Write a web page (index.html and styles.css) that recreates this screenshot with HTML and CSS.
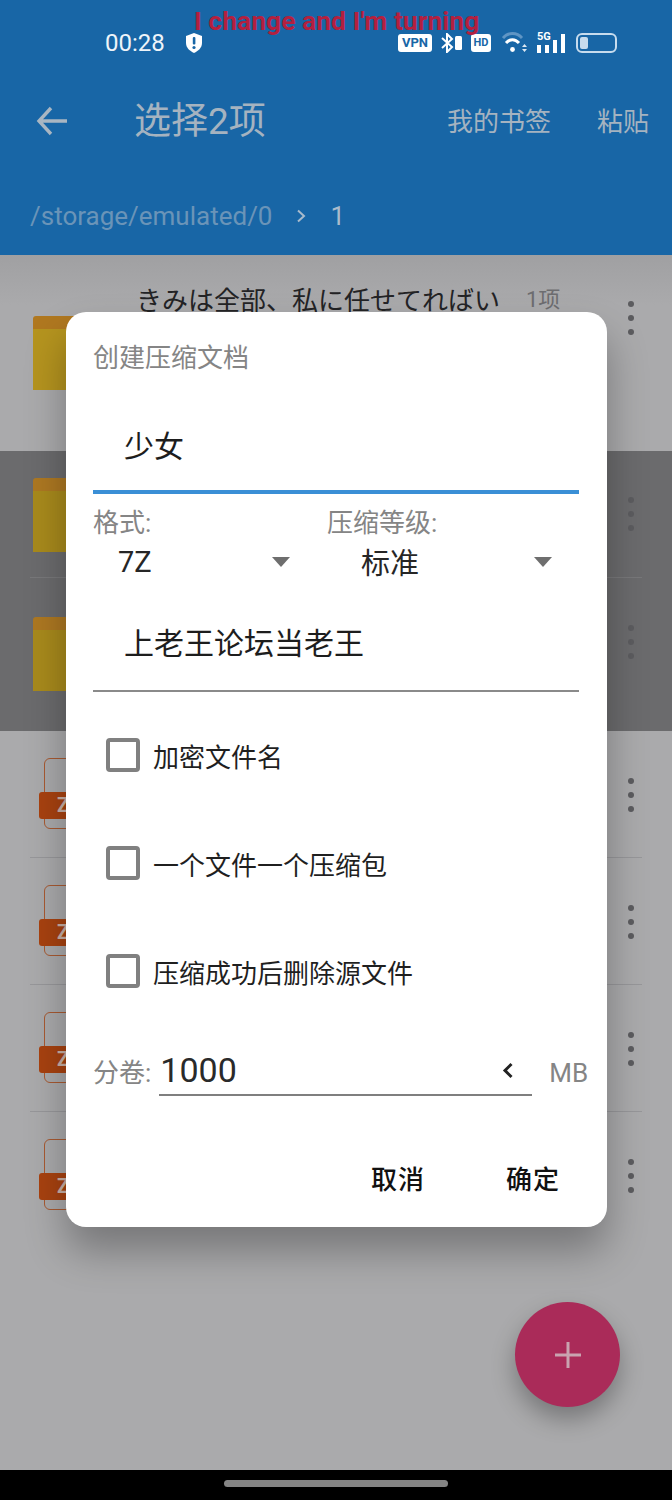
FILE: index.html
```html
<!DOCTYPE html>
<html lang="en">
<head>
  <meta charset="UTF-8">
  <title>创建压缩文档</title>
  <meta name="viewport" content="width=device-width, initial-scale=1.0">
  <link rel="stylesheet" href="styles.css">
</head>
<body>
  <div class="phone">
    <header class="appbar">
      <div class="lyric">I change and I'm turning</div>
      <div class="status">
        <span class="time">00:28</span>
        <svg class="shield" width="18" height="20" viewBox="0 0 18 20"><path d="M9 0 L17 3 V10 C17 15 13 18 9 20 C5 18 1 15 1 10 V3 Z" fill="#fff"/><rect x="7.8" y="4" width="2.6" height="7.5" rx="1" fill="#1866a6"/><circle cx="9" cy="14.5" r="1.6" fill="#1866a6"/></svg>
        <span class="status-right">
          <span class="badge badge-vpn">VPN</span>
          <svg width="21" height="20" viewBox="0 0 21 20"><path d="M1 5 L11 14 L6 19 V1 L11 6 L1 15" fill="none" stroke="#fff" stroke-width="2"/><rect x="14" y="3" width="7" height="14" rx="1.5" fill="#fff"/></svg>
          <span class="badge badge-hd">HD</span>
          <svg class="wifi" width="26" height="22" viewBox="0 0 26 22"><path d="M1 6 C6 0 15 0 20 6" fill="none" stroke="#5f95c4" stroke-width="2.8"/><path d="M4 11 C8 6.500 13 6.500 17 11" fill="none" stroke="#fff" stroke-width="3"/><circle cx="10.500" cy="17.500" r="2.400" fill="#fff"/><path d="M20 15 L22.500 12 L25 15 Z M20 17 L25 17 L22.500 20 Z" fill="#dce8f2"/></svg>
          <span class="signal">
            <span class="signal-label">5G</span>
            <span class="bar bar-1"></span><span class="bar bar-2"></span><span class="bar bar-3"></span><span class="bar bar-4"></span>
          </span>
          <span class="battery"><span class="battery-fill"></span></span>
        </span>
      </div>
      <div class="toolbar">
        <svg class="back" width="32" height="30" viewBox="0 0 32 30"><path d="M15 2 L3 15 L15 28 M3 15 H31" fill="none" stroke="#a9b6c2" stroke-width="3.4"/></svg>
        <h1 class="title">选择2项</h1>
        <a class="action action-bookmarks">我的书签</a>
        <a class="action">粘贴</a>
      </div>
      <div class="crumbs">
        <span class="crumb-root">/storage/emulated/0</span>
        <svg width="10" height="14" viewBox="0 0 10 14"><path d="M2 1.500 L8 7 L2 12.500" fill="none" stroke="#a9bbcc" stroke-width="2"/></svg>
        <span class="crumb-current">1</span>
      </div>
    </header>

    <main class="list">
      <div class="row row-first">
        <div class="folder"></div>
        <div class="row-name">きみは全部、私に任せてればい</div>
        <div class="row-count">1项</div>
        <div class="dots"><i></i><i></i><i></i></div>
      </div>
      <div class="row row-second selected">
        <div class="folder"></div>
        <div class="dots"><i></i><i></i><i></i></div>
      </div>
      <div class="row row-third selected">
        <div class="folder"></div>
        <div class="dots"><i></i><i></i><i></i></div>
      </div>
      <div class="row row-file">
        <div class="zip"><span class="zip-tag">Z</span></div>
        <div class="dots"><i></i><i></i><i></i></div>
      </div>
      <div class="row row-file">
        <div class="zip"><span class="zip-tag">Z</span></div>
        <div class="dots"><i></i><i></i><i></i></div>
      </div>
      <div class="row row-file">
        <div class="zip"><span class="zip-tag">Z</span></div>
        <div class="dots"><i></i><i></i><i></i></div>
      </div>
      <div class="row row-file">
        <div class="zip"><span class="zip-tag">Z</span></div>
        <div class="dots"><i></i><i></i><i></i></div>
      </div>
    </main>

    <div class="navbar"><span class="handle"></span></div>

    <button class="fab"><svg width="28" height="28" viewBox="0 0 28 28"><path d="M14 1 V27 M1 14 H27" stroke="#c9a3b0" stroke-width="3"/></svg></button>

    <section class="dialog">
      <h2 class="dialog-title">创建压缩文档</h2>
      <div class="field field-name">少女</div>
      <div class="selects">
        <div class="select-col">
          <label class="small-label">格式:</label>
          <div class="select-value select-format">7Z<span class="caret"></span></div>
        </div>
        <div class="select-col">
          <label class="small-label">压缩等级:</label>
          <div class="select-value select-level">标准<span class="caret"></span></div>
        </div>
      </div>
      <div class="field field-password">上老王论坛当老王</div>
      <div class="check"><span class="box"></span>加密文件名</div>
      <div class="check"><span class="box"></span>一个文件一个压缩包</div>
      <div class="check"><span class="box"></span>压缩成功后删除源文件</div>
      <div class="volume">
        <span class="small-label">分卷:</span>
        <div class="volume-input">
          <span>1000</span>
          <svg width="12" height="17" viewBox="0 0 12 17"><path d="M9.500 2 L3 8.500 L9.500 15" fill="none" stroke="#222" stroke-width="3"/></svg>
        </div>
        <span class="small-label">MB</span>
      </div>
      <div class="buttons">
        <button class="btn">取消</button>
        <button class="btn">确定</button>
      </div>
    </section>
  </div>
</body>
</html>
```

FILE: styles.css
```css
* {
  box-sizing: border-box;
}
body {
  margin: 0;
  font-family: Roboto, "Noto Sans CJK SC", sans-serif;
  background: #000;
}
.phone {
  position: relative;
  width: 672px;
  height: 1500px;
  overflow: hidden;
  display: flex;
  flex-direction: column;
}

/* app bar */
.appbar {
  height: 255px;
  background: #1866a6;
  flex-shrink: 0;
}
.lyric {
  position: absolute;
  top: 6px;
  left: 194px;
  font-size: 26.500px;
  line-height: 30px;
  font-weight: 700;
  color: #b3203f;
  white-space: nowrap;
}
.status {
  height: 86px;
  padding: 29px 55px 0 105px;
  display: flex;
  align-items: flex-start;
  color: #fff;
}
.time {
  font-size: 24px;
  line-height: 28px;
  margin-right: 20px;
  color: #eef4f9;
}
.shield {
  margin-top: 4px;
}
.status-right {
  margin-left: auto;
  display: flex;
  align-items: center;
  gap: 9px;
  height: 28px;
}
.badge {
  background: #fff;
  color: #1866a6;
  font-weight: 700;
  border-radius: 3px;
  text-align: center;
}
.badge-vpn {
  width: 34px;
  height: 18px;
  font-size: 13px;
  line-height: 18px;
}
.badge-hd {
  width: 20px;
  height: 18px;
  font-size: 11px;
  line-height: 18px;
}
.wifi {
  margin-left: 2px;
}
.signal {
  width: 29px;
  height: 20px;
  display: flex;
  align-items: flex-end;
  gap: 4px;
  position: relative;
}
.signal-label {
  position: absolute;
  top: -2px;
  left: 0;
  font-size: 11px;
  line-height: 11px;
  font-weight: 700;
}
.bar {
  width: 4px;
  background: #fff;
}
.bar-1 { height: 8px; }
.bar-2 { height: 8px; }
.bar-3 { height: 13px; }
.bar-4 { height: 19px; }
.battery {
  width: 41px;
  height: 20px;
  margin-left: 1px;
  border: 2px solid #c7dcee;
  border-radius: 6px;
  padding: 2px;
}
.battery-fill {
  display: block;
  width: 8px;
  height: 100%;
  border-radius: 2px;
  background: #c7dcee;
}

.toolbar {
  height: 70px;
  padding: 0 23px 0 36px;
  display: flex;
  align-items: center;
}
.title {
  margin: 2px 0 0 66px;
  font-size: 37px;
  line-height: 44px;
  font-weight: 400;
  color: #a5b3c0;
  flex: 1;
}
.action {
  margin-top: 2px;
  font-size: 26px;
  line-height: 36px;
  color: #a5b3c0;
}
.action-bookmarks {
  margin-right: 46px;
}
.crumbs {
  padding: 44px 0 0 30px;
  display: flex;
  align-items: center;
  gap: 24px;
  font-size: 26px;
  line-height: 32px;
}
.crumb-root {
  color: #6a94b8;
}
.crumb-current {
  color: #a9bbcc;
}

/* file list behind the dialog */
.list {
  flex: 1;
  background: #aaaaac;
}
.row {
  position: relative;
  margin: 0;
  padding-left: 33px;
}
.row-first {
  height: 196px;
  padding-top: 61px;
  background: linear-gradient(#a0a0a2, #aaaaac 50px);
}
.row-second { height: 127px; padding-top: 27px; }
.row-third { height: 153px; padding-top: 39px; }
.row-file { height: 127px; padding: 27px 0 0 44px; }
.selected {
  background: #6b6b6d;
}
.row-file:not(:last-child)::after,
.row-second::after {
  content: "";
  position: absolute;
  left: 30px;
  right: 30px;
  bottom: 0;
  height: 1px;
  background: #97979a;
}
.row-second::after {
  background: #78787a;
}
.folder {
  width: 74px;
  height: 74px;
  border-top: 13px solid #b07820;
  border-radius: 3px 3px 0 0;
  background: #b5941f;
}
.selected .folder {
  border-top-color: #ad7822;
  background: #a88a1c;
}
.row-name {
  position: absolute;
  top: 27px;
  left: 136px;
  font-family: "Noto Sans CJK JP", sans-serif;
  font-size: 26px;
  line-height: 34px;
  color: #232325;
  white-space: nowrap;
}
.row-count {
  position: absolute;
  top: 30px;
  left: 526px;
  font-size: 22px;
  line-height: 30px;
  color: #6d6d70;
}
.dots {
  position: absolute;
  left: 628px;
  display: flex;
  flex-direction: column;
  gap: 8px;
}
.dots i {
  width: 6px;
  height: 6px;
  border-radius: 50%;
  background: #5c5c5f;
}
.row-first .dots { top: 46px; }
.row-second .dots { top: 46px; }
.row-third .dots { top: 47px; }
.row-file .dots { top: 47px; }
.zip {
  position: relative;
  width: 62px;
  height: 71px;
  border: 1.500px solid #a85a32;
  border-radius: 6px;
}
.zip-tag {
  position: absolute;
  top: 33px;
  left: -6px;
  width: 70px;
  height: 27px;
  padding-left: 18px;
  background: #a84210;
  border-radius: 3px;
  color: #c9b2a8;
  font-size: 20px;
  line-height: 27px;
  font-weight: 700;
}
.navbar {
  height: 30px;
  background: #000;
  flex-shrink: 0;
  display: flex;
  justify-content: center;
  padding-top: 10px;
}
.handle {
  width: 224px;
  height: 7px;
  border-radius: 4px;
  background: #858585;
}
.fab {
  position: absolute;
  left: 515px;
  top: 1302px;
  width: 105px;
  height: 105px;
  border: 0;
  border-radius: 50%;
  background: #aa2b59;
  box-shadow: 0 12px 24px rgba(0, 0, 0, .3);
  display: flex;
  align-items: center;
  justify-content: center;
}

/* dialog */
.dialog {
  position: absolute;
  left: 66px;
  top: 312px;
  width: 541px;
  height: 915px;
  background: #fff;
  border-radius: 20px;
  padding: 28px 28px 0 27px;
  box-shadow: 0 24px 40px rgba(0, 0, 0, .3);
}
.dialog-title {
  margin: 0;
  font-size: 26px;
  line-height: 36px;
  font-weight: 400;
  color: #858585;
}
.field {
  padding-left: 31px;
  font-size: 30px;
  color: #1d1d1d;
}
.field-name {
  margin-top: 20px;
  height: 98px;
  padding-top: 28px;
  line-height: 46px;
  border-bottom: 4px solid #3a8fd6;
}
.field-password {
  margin-top: 0;
  height: 111px;
  padding-top: 40px;
  line-height: 46px;
  border-bottom: 2px solid #8a8a8a;
}
.selects {
  display: flex;
  margin-top: 11px;
}
.select-col {
  width: 234px;
}
.select-col + .select-col {
  width: 252px;
}
.small-label {
  font-size: 26px;
  line-height: 36px;
  color: #858585;
  white-space: nowrap;
}
.select-value {
  display: flex;
  align-items: center;
  justify-content: space-between;
  height: 40px;
  color: #262626;
  font-size: 29px;
  padding-right: 27px;
}
.select-format {
  padding: 2px 37px 0 25px;
}
.select-level {
  padding-left: 34px;
}
.select-level .caret {
  margin-top: 2px;
}
.caret {
  width: 0;
  height: 0;
  border-left: 9.500px solid transparent;
  border-right: 9.500px solid transparent;
  border-top: 10px solid #6e6e6e;
}
.check {
  display: flex;
  align-items: center;
  gap: 13px;
  height: 108px;
  padding-left: 13px;
  font-size: 26px;
  color: #1f1f1f;
}
.field-password + .check {
  margin-top: 9px;
}
.box {
  width: 34px;
  height: 34px;
  border: 4px solid #808080;
  border-radius: 4px;
}
.volume {
  display: flex;
  align-items: flex-end;
  gap: 8px;
  margin-top: 21px;
  width: 493px;
}
.volume > * {
  flex-shrink: 0;
}
.volume .small-label {
  line-height: 42px;
  padding-bottom: 2px;
}
.volume-input {
  width: 373px;
  height: 50px;
  border-bottom: 2px solid #7f7f7f;
  display: flex;
  align-items: center;
  justify-content: space-between;
  padding: 0 18px 0 1px;
  font-size: 34px;
  color: #2a2a2a;
  margin-right: 9px;
}
.buttons {
  display: flex;
  justify-content: flex-end;
  gap: 81px;
  margin-top: 64px;
  padding-right: 19px;
}
.btn {
  border: 0;
  background: none;
  padding: 0;
  font-family: Roboto, "Noto Sans CJK SC", sans-serif;
  font-size: 26px;
  line-height: 40px;
  font-weight: 500;
  letter-spacing: 1px;
  color: #111;
}
```
